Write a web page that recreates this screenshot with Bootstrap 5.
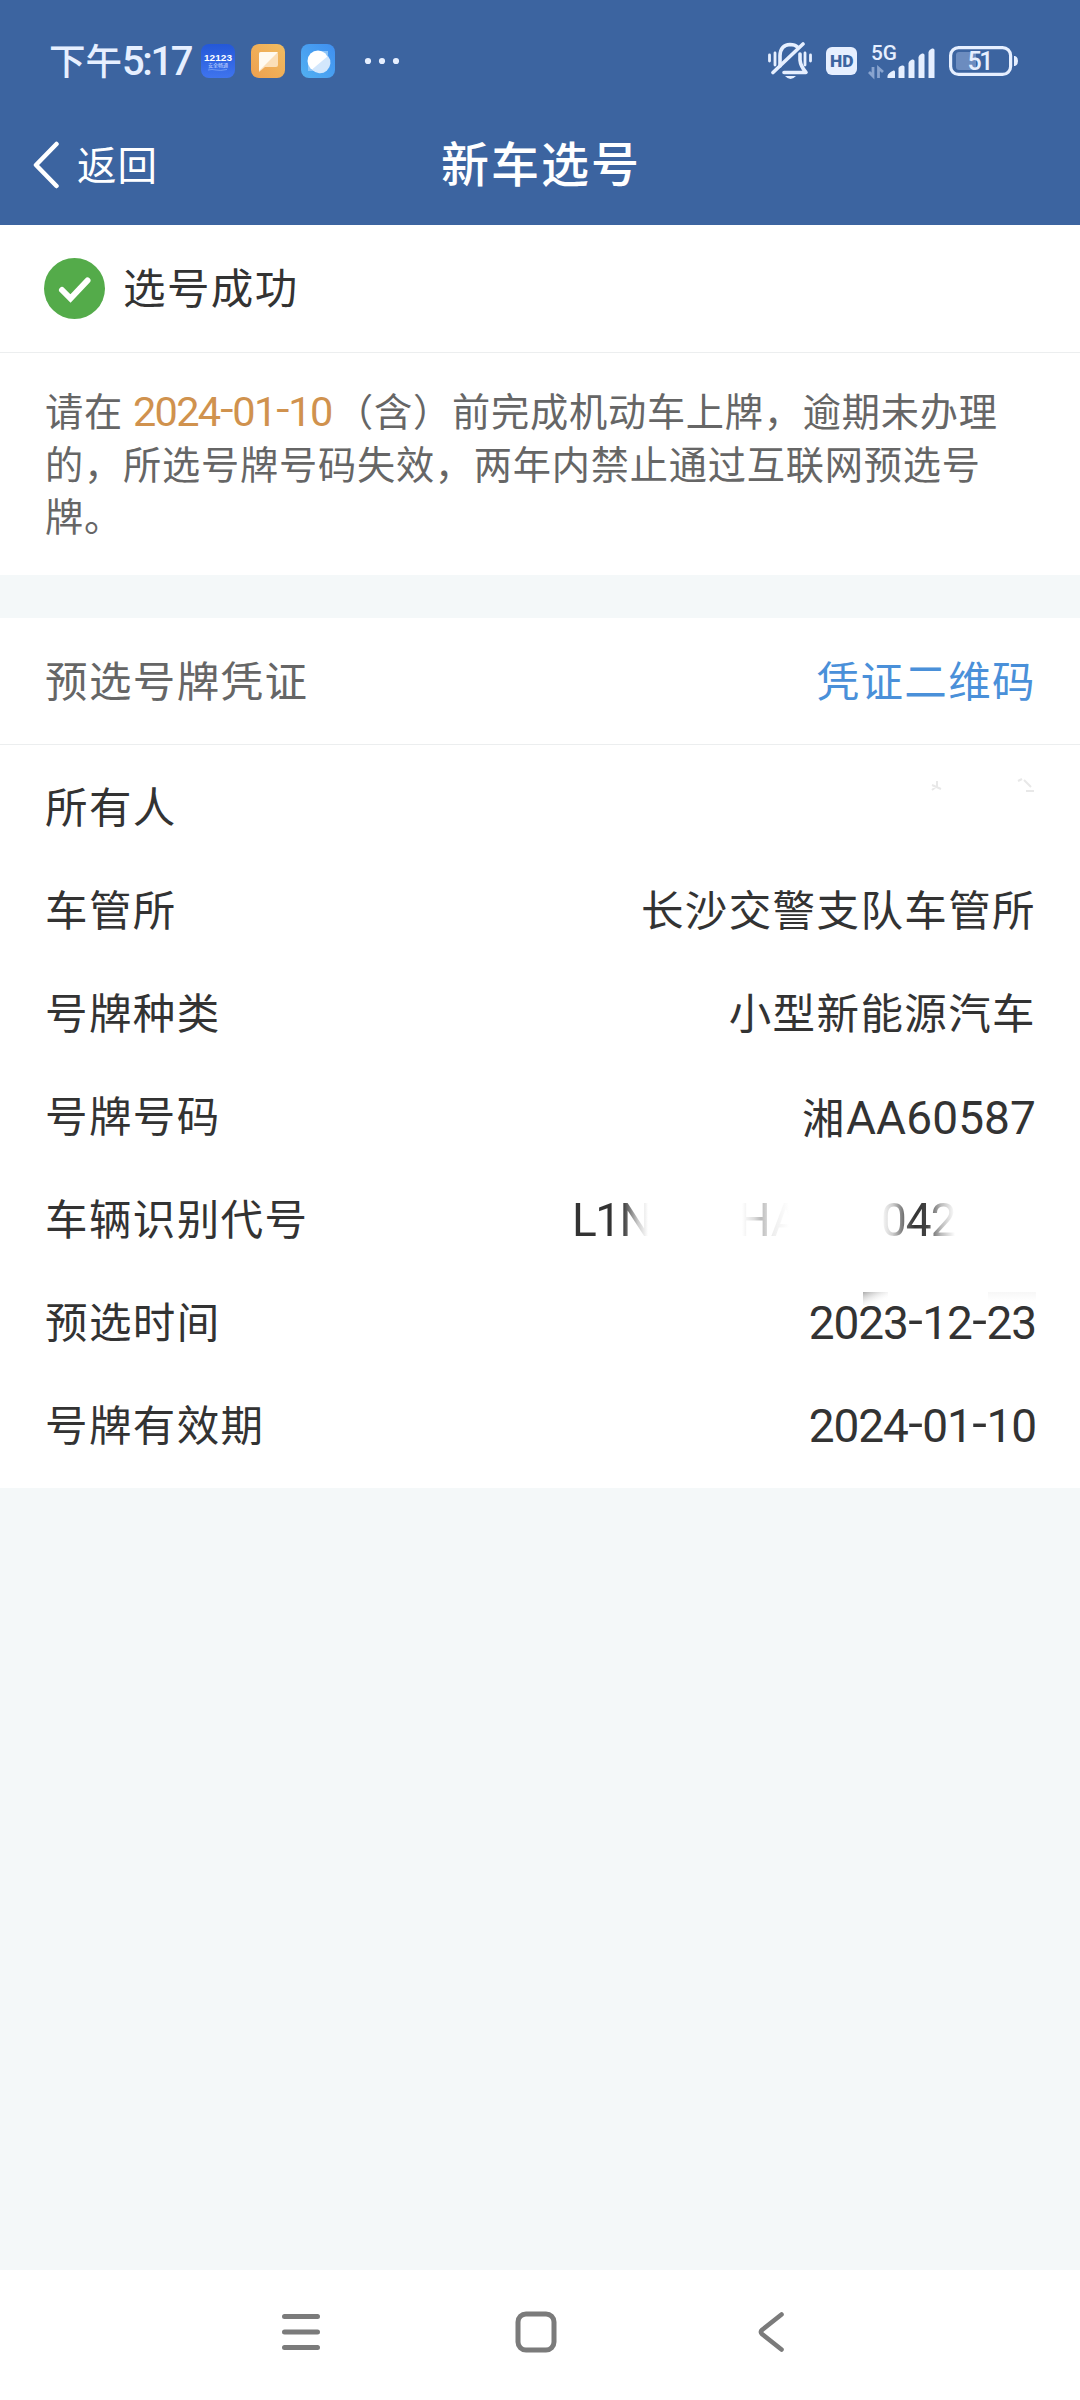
<!DOCTYPE html>
<html lang="zh-CN">
<head>
<meta charset="utf-8">
<meta name="viewport" content="width=device-width, initial-scale=1">
<title>新车选号</title>
<link href="https://cdn.jsdelivr.net/npm/bootstrap@5.3.0/dist/css/bootstrap.min.css" rel="stylesheet">
<style>
  body { font-family: "Noto Sans CJK SC", sans-serif; background: #f4f8f9; color: #333; width: 1080px; height: 2400px; overflow: hidden; }
  svg { display: block; flex: none; }
  .top-area { background: #3c64a0; height: 225px; }
  .status-line { height: 122px; padding-left: 49px; padding-right: 62px; color: #e6efff; }
  .clock { font-size: 36.5px; font-weight: 500; line-height: 50px; width: 146px; white-space: nowrap; padding-bottom: 1px; }
  .clock .digits { font-family: Roboto, sans-serif; font-size: 40px; letter-spacing: -2.4px; font-weight: 500; }
  .gap-tiny { margin-left: 6px; }
  .gap-app { margin-left: 16px; }
  .gap-dots { margin-left: 29px; }
  .gap-sys { margin-left: 14px; }
  .gap-net { margin-left: 11px; }
  .title-line { height: 84px; margin-top: -1px; }
  .title-line .side { flex: 1 1 0; padding-left: 33px; gap: 17px; font-size: 39.5px; letter-spacing: 1px; }
  .title-line .side svg { margin-top: 3px; }
  .title-line .side span { padding-bottom: 1px; }
  .title-line h1 { font-size: 48px; letter-spacing: 2px; line-height: 60px; font-weight: 500; padding: 0 0 4px 2px; }
  .panel-box { background: #fff; }
  .panel-head { height: 128px; padding: 0 44px; border-bottom: 1.5px solid #eceeef; font-size: 42.5px; letter-spacing: 1.4px; line-height: 60px; }
  .panel-head span, .panel-head a { padding-bottom: 5px; }
  .panel-head .result { margin-left: 18px; }
  .notice { height: 222px; padding: 31px 30px 0 45px; font-size: 38.2px; letter-spacing: .8px; line-height: 52px; color: #666; }
  .deadline { display: inline-block; width: 212px; padding-left: 10px; color: #d0924e; font-family: Roboto, sans-serif; font-size: 41.5px; letter-spacing: -1.7px; line-height: 50px; white-space: nowrap; }
  .dash { display: inline-block; transform: translateY(-3px) scaleX(1.15); margin: 0 1.5px 0 1.5px; }
  .voucher { margin-top: 43px; }
  .voucher .panel-head { color: #666; height: 127px; padding-left: 45px; }
  .voucher .panel-head a { color: #4a90d9; }
  .field-list { padding: 11px 44px 11px 45px; font-size: 42.5px; letter-spacing: 1.4px; }
  .field { height: 103px; line-height: 60px; }
  .cjk { padding-bottom: 5px; }
  .latin { font-family: Roboto, sans-serif; font-size: 46px; letter-spacing: -.4px; }
  .plate .latin { letter-spacing: .1px; }
  .date-value { letter-spacing: -1.1px; }
  .vin { width: 464px; }
  .vin span { -webkit-background-clip: text; background-clip: text; color: transparent; line-height: 60px; white-space: pre; }
  .vin .a { width: 80px; letter-spacing: -1.6px; background-image: linear-gradient(90deg, #333 46px, #444 52px, #ccc 66px, #fff 76px); }
  .vin .b { margin-left: 86px; width: 51px; background-image: linear-gradient(90deg, #fff 4px, #ddd 16px, #bbb 23px, #eee 35px, #fff 51px); }
  .vin .c { margin-left: 92px; width: 80px; letter-spacing: -1px; background-image: linear-gradient(90deg, #f5f5f5 2px, #ccc 12px, #777 22px, #333 34px, #444 46px, #bbb 60px, #fff 74px); }
  .smudge { right: -1px; top: 21px; }
  .filler { flex: 1 1 auto; }
  .sys-nav { height: 130px; background: #fff; padding: 0 295px 6px 281px; }
  .sys-nav .home { margin-right: 6px; }
</style>
<script src="https://cdn.jsdelivr.net/npm/bootstrap@5.3.0/dist/js/bootstrap.bundle.min.js"></script>
</head>
<body class="d-flex flex-column">
<header class="top-area text-white">
  <div class="status-line d-flex align-items-center">
    <div class="clock">下午<span class="digits">5:17</span></div>
    <svg class="gap-tiny" width="34" height="34" viewBox="0 0 34 34">
      <defs><linearGradient id="g1" x2="0" y2="1"><stop stop-color="#2458d8"/><stop offset="1" stop-color="#3f74ee"/></linearGradient></defs>
      <rect width="34" height="34" rx="8" fill="url(#g1)"/>
      <text x="3" y="17" font-family="Liberation Sans" font-weight="700" font-size="9" textLength="28" lengthAdjust="spacingAndGlyphs" fill="#fff">12123</text>
      <text x="7" y="23" font-family="Noto Sans CJK SC" font-size="5" textLength="20" fill="#c9dcff">安全畅通</text>
      <path d="M7 26q4-1 8 0t11-.5" fill="none" stroke="#7fa6f5" stroke-width=".8"/>
    </svg>
    <svg class="gap-app" width="34" height="34" viewBox="0 0 34 34">
      <defs><linearGradient id="g2" x1="1" x2="0" y2="1"><stop stop-color="#f0bd62"/><stop offset="1" stop-color="#efa04e"/></linearGradient></defs>
      <rect width="34" height="34" rx="8" fill="url(#g2)"/>
      <path d="M10 8H25Q27 8 27 10V21Q27 23 25 23H14L8 28V10Q8 8 10 8Z" fill="#fbdfb8"/>
      <path d="M10 8H27L8 27V10Q8 8 10 8Z" fill="#fffaf0"/>
    </svg>
    <svg class="gap-app" width="34" height="34" viewBox="0 0 34 34">
      <defs><linearGradient id="g3" x1="1" x2="0" y2="1"><stop stop-color="#3f8ff0"/><stop offset="1" stop-color="#52b0f2"/></linearGradient></defs>
      <rect width="34" height="34" rx="8" fill="url(#g3)"/>
      <path d="M21 7h6v6zM7 21v6h6z" fill="#8cc4f8"/>
      <circle cx="17" cy="17" r="10.500" fill="#fff"/>
      <path d="M27 12A10.500 10.500 0 0 1 11 25.600Z" fill="#d3e7fc"/>
    </svg>
    <svg class="gap-dots" width="36" height="8" viewBox="0 0 36 8" fill="#e6efff"><circle cx="4" cy="4" r="3.100"/><circle cx="18" cy="4" r="3.100"/><circle cx="32" cy="4" r="3.100"/></svg>
    <svg class="ms-auto" width="44" height="38" viewBox="0 0 44 38" fill="none" stroke="#e6efff" stroke-width="3.600" stroke-linecap="round">
      <path d="M12 24V13.500Q12.500 3 22 2.500Q27 2.500 29.500 5"/>
      <path d="M5 30.500L35 2"/>
      <path d="M32 12V18Q32.500 24 38 30.500H16" stroke-linejoin="round"/>
      <path d="M17 34H28Q22.500 40 17 34Z" fill="#e6efff" stroke="none"/>
      <path d="M1.500 13V19M7 11V23M37 11V23M42.500 13V19" stroke-width="2.800"/>
    </svg>
    <svg class="gap-sys" width="31" height="28" viewBox="0 0 31 28"><rect width="31" height="28" rx="6" fill="#e6efff"/><text x="4" y="19.800" font-family="Roboto" font-size="16" font-weight="900" textLength="23.500" lengthAdjust="spacingAndGlyphs" fill="#3c64a0">HD</text></svg>
    <svg class="gap-net" width="67" height="38" viewBox="0 0 67 38" fill="#e6efff">
      <text x="3" y="18" font-family="Roboto" font-size="20" font-weight="500" textLength="26" lengthAdjust="spacingAndGlyphs">5G</text>
      <path d="M19.500 36V34Q20 31 25.500 28.500 27 28 27 30V36ZM30.500 36V26Q31 24 34 23.500 36.500 23 36.500 25V36ZM40.500 36V21Q41 18.500 44 17.500 46.500 17 46.500 19V36ZM50.500 36V15Q51 12.500 54 11.500 56.500 11 56.500 13V36ZM60.500 36V10Q61 7.500 64 6.500 66.500 6 66.500 8V36Z"/>
      <path d="M5 25V34L1 30M10.500 36V26L15 30" fill="none" stroke="#89a4cf" stroke-width="2.800"/>
    </svg>
    <svg class="gap-sys" width="69" height="30" viewBox="0 0 69 30">
      <rect x="1.600" y="1.600" width="60" height="26.800" rx="8" fill="none" stroke="#e6efff" stroke-width="3.200"/>
      <path d="M10 6H27V24H10Q7 24 7 21V9Q7 6 10 6Z" fill="#6c8cbf"/>
      <path d="M65 10H66Q69 11 69 15T66 20H65Z" fill="#e6efff"/>
      <text x="18.500" y="24" font-family="Roboto" font-size="25" font-weight="500" textLength="26" fill="#e6efff">51</text>
    </svg>
  </div>
  <div class="title-line d-flex align-items-center">
    <div class="side d-flex align-items-center">
      <svg width="27" height="48" viewBox="0 0 27 48" fill="none" stroke="#fff" stroke-width="4.500" stroke-linecap="round" stroke-linejoin="round"><path d="M23.500 3L3 24L23.500 45"/></svg>
      <span>返回</span>
    </div>
    <h1 class="m-0">新车选号</h1>
    <div class="side"></div>
  </div>
</header>

<section class="panel-box">
  <div class="panel-head d-flex align-items-center">
    <svg width="61" height="61" viewBox="0 0 61 61"><circle cx="30.500" cy="30.500" r="30.500" fill="#54ab4a"/><path d="M18 32L26.500 40.500L43.500 22.500" fill="none" stroke="#fff" stroke-width="6" stroke-linecap="round"/></svg>
    <span class="result">选号成功</span>
  </div>
  <div class="notice">请在<span class="deadline">2024<span class="dash">-</span>01<span class="dash">-</span>10</span>（含）前完成机动车上牌，逾期未办理<br>的，所选号牌号码失效，两年内禁止通过互联网预选号<br>牌。</div>
</section>

<section class="panel-box voucher">
  <div class="panel-head d-flex align-items-center justify-content-between">
    <span>预选号牌凭证</span><a href="#" class="text-decoration-none">凭证二维码</a>
  </div>
  <div class="field-list">
    <div class="field d-flex align-items-center justify-content-between"><span class="cjk">所有人</span>
      <svg width="106" height="60" viewBox="0 0 106 60" fill="none" stroke="#e8e8e8" stroke-width="2"><path d="M7 3v6M2 12l5-4M2 7l9 4M94 2l7 7M88 3l4-2M96 13h8"/></svg>
    </div>
    <div class="field d-flex align-items-center justify-content-between"><span class="cjk">车管所</span><span class="cjk">长沙交警支队车管所</span></div>
    <div class="field d-flex align-items-center justify-content-between"><span class="cjk">号牌种类</span><span class="cjk">小型新能源汽车</span></div>
    <div class="field d-flex align-items-center justify-content-between"><span class="cjk">号牌号码</span><span class="plate">湘<span class="latin">AA60587</span></span></div>
    <div class="field d-flex align-items-center justify-content-between"><span class="cjk">车辆识别代号</span>
      <div class="vin latin d-flex"><span class="a">L1N</span><span class="b">HA</span><span class="c">042</span></div>
    </div>
    <div class="field d-flex align-items-center justify-content-between position-relative"><span class="cjk">预选时间</span><span class="latin date-value">2023<span class="dash">-</span>12<span class="dash">-</span>23</span>
      <svg class="smudge position-absolute" width="174" height="13" viewBox="0 0 174 13">
        <defs><linearGradient id="s1" x2=".7" y2=".8"><stop stop-color="#aaa"/><stop offset="1" stop-color="#fff" stop-opacity="0"/></linearGradient>
        <linearGradient id="s2" x2="0" y2="1"><stop stop-color="#f7f7f7"/><stop offset="1" stop-color="#fff"/></linearGradient></defs>
        <rect width="25" height="13" fill="url(#s1)"/><rect x="125" width="48" height="9" fill="url(#s2)"/>
      </svg>
    </div>
    <div class="field d-flex align-items-center justify-content-between"><span class="cjk">号牌有效期</span><span class="latin date-value">2024<span class="dash">-</span>01<span class="dash">-</span>10</span></div>
  </div>
</section>
<div class="filler"></div>
<nav class="sys-nav d-flex align-items-center justify-content-between">
  <svg width="40" height="42" viewBox="0 0 40 42" stroke="#7b7b7b" stroke-width="5" stroke-linecap="round"><path d="M3.500 5.500H36.500M3.500 21H36.500M3.500 36.500H36.500"/></svg>
  <svg class="home" width="42" height="42" viewBox="0 0 42 42"><rect x="3" y="3" width="36" height="36" rx="8" fill="none" stroke="#7b7b7b" stroke-width="5"/></svg>
  <svg width="28" height="42" viewBox="0 0 28 42" fill="none" stroke="#7b7b7b" stroke-width="4.600" stroke-linecap="round"><path d="M24.500 3.500L5 19Q3 21 5 23L24.500 38.500"/></svg>
</nav>
</body>
</html>
